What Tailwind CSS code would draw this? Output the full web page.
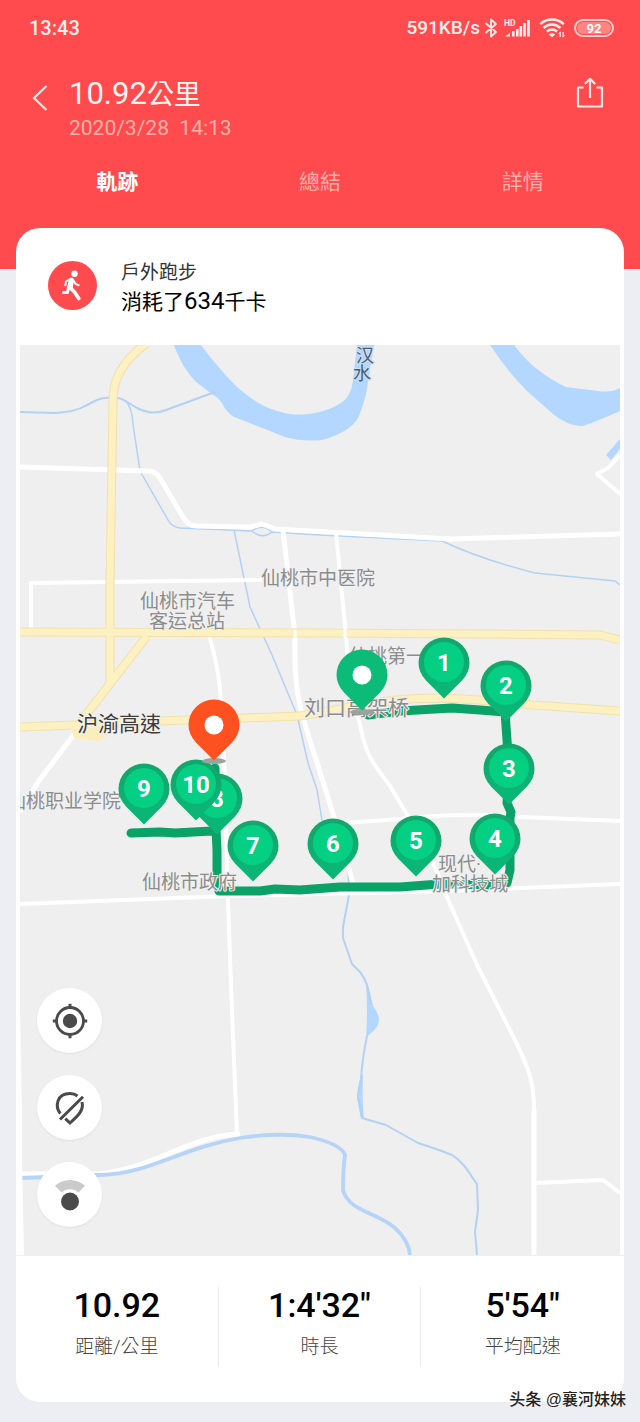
<!DOCTYPE html>
<html lang="zh-Hant">
<head>
<meta charset="utf-8">
<meta name="viewport" content="width=device-width, initial-scale=1">
<title>10.92公里</title>
<script src="https://cdn.jsdelivr.net/npm/@tailwindcss/browser@4"></script>
</head>
<body class="relative min-h-screen bg-[#edeef3] pb-5 font-['Roboto','Noto_Sans_CJK_TC',sans-serif] text-black">

<header class="bg-[#ff4a4e] pb-16 text-white">
  <div class="flex h-14 items-center justify-between pr-[26px] pl-[29px] text-[#ffeeea]">
    <time class="text-[20px] leading-6 font-medium">13:43</time>
    <div class="flex items-center">
      <span class="text-[19px] leading-6 font-medium">591KB/s</span>
      <svg class="ml-1 h-5 w-[14px]" viewBox="0 0 14 20" fill="none" stroke="currentColor" stroke-width="1.8" stroke-linejoin="round" stroke-linecap="round" aria-label="Bluetooth"><path d="M2 5.500 12 14 7 18.500V1.500L12 6 2 14.500"/></svg>
      <svg class="ml-[6px] h-5 w-[27px]" viewBox="0 0 27 20" fill="currentColor" aria-label="HD">
        <text x="0" y="7.500" font-size="8.500" font-weight="700">HD</text>
        <path d="M1 18.500 6 15v3.500zM8 13h2.600v5.500H8zM12 11h2.600v7.500H12zM15.500 8h2.600v10.500h-2.600zM19.200 5h2.600v13.500h-2.600zM23 2h2.800v16.500H23z"/>
      </svg>
      <svg class="ml-2 h-5 w-[27px]" viewBox="0 0 27 20" fill="none" stroke="currentColor" stroke-width="2.500" aria-label="Wi-Fi">
        <path d="M1.200 6.200a17 17 0 0 1 23.600 0M4.600 10a12 12 0 0 1 16.800 0M8 13.500a7.200 7.200 0 0 1 10 0"/>
        <path d="M13 19.200 9.800 16.500a4.600 4.600 0 0 1 6.400 0z" fill="currentColor" stroke="none"/>
        <path d="M21.200 14v5M24.200 14v5" stroke-width="1.300"/>
        <path d="M19.800 16l1.400-2.200M25.600 17l-1.400 2.200" stroke-width="1"/>
      </svg>
      <span class="ml-2 flex h-[18px] w-10 items-center justify-center rounded-full border-2 border-[#ffcfca] p-px">
        <span class="flex h-full w-full items-center justify-center rounded-full bg-[#ff8583] text-[13px] leading-none font-bold text-white">92</span>
      </span>
    </div>
  </div>

  <div class="flex items-start justify-between pt-5 pr-9 pl-8">
    <div class="flex">
      <button type="button" class="mt-2 h-7 w-[37px]" aria-label="返回">
        <svg class="h-7 w-4" viewBox="0 0 16 28" fill="none" stroke="#ffe9e4" stroke-width="2.200"><path d="M14.500 2 2 14l12.500 12"/></svg>
      </button>
      <div>
        <h1 class="text-[27px] leading-9 text-[#fff4ee]"><span class="text-[31px]">10.92</span>公里</h1>
        <p class="text-[21px] leading-[30px] text-[#ffb2ab]">2020/3/28&nbsp; 14:13</p>
      </div>
    </div>
    <button type="button" class="h-9 w-7" aria-label="分享">
      <svg class="h-9 w-7" viewBox="0 0 28 36" fill="none" stroke="#ffe9e4" stroke-width="2.200" stroke-linejoin="round"><path d="M7.500 11.500H2V30.500H26V11.500H20.500M14 22V3M8.800 8 14 2.800 19.200 8"/></svg>
    </button>
  </div>

  <nav class="mt-4 grid grid-cols-3 px-4 text-[21px] leading-[46px]">
    <button type="button" class="font-bold" aria-current="page">軌跡</button>
    <button type="button" class="text-[#ffb0ab]">總結</button>
    <button type="button" class="text-[#ffb0ab]">詳情</button>
  </nav>
</header>

<main class="relative mx-4 -mt-[41px] overflow-hidden rounded-[24px] bg-white">
  <section class="flex h-[117px] items-center gap-6 px-8 pb-[2px]">
    <svg class="size-[49px] shrink-0" viewBox="0 0 49 49" aria-hidden="true">
      <circle cx="24.500" cy="24.500" r="24.500" fill="#ff4a4e"/>
      <circle cx="26.500" cy="12.800" r="3.200" fill="#fff"/>
      <g fill="none" stroke="#fff" stroke-linecap="round" stroke-linejoin="round">
        <path d="M23.300 19.500 22 26.500" stroke-width="5.400"/>
        <path d="M22.500 27 26.500 31 30.800 37.500" stroke-width="3.600"/>
        <path d="M20.500 26 19.500 31.500 15.500 31.500" stroke-width="3"/>
        <path d="M22.500 17.800 18 20.500 17.300 24.300M25.500 19.500 27.500 22.800 30.600 24.200" stroke-width="2"/>
      </g>
    </svg>
    <div class="pt-1">
      <h2 class="text-[19px] leading-7 text-[#333]">戶外跑步</h2>
      <p class="text-[21px] leading-7"><span>消耗了</span><span class="text-[24px]">634</span><span>千卡</span></p>
    </div>
  </section>

  <section class="relative mx-1" aria-label="軌跡地圖">
    <svg class="block h-auto w-full bg-[#efefef]" viewBox="20 345 600 910" fill="none" stroke-linejoin="round">
      <defs>
        <linearGradient id="rim" x1="0" y1="0" x2="0" y2="1"><stop offset="0.300" stop-color="#12a76d"/><stop offset="0.750" stop-color="#0bb576"/></linearGradient>
        <path id="pin" d="M0 35.500-18 17.500C-23 12-25.500 6-25.500 0A25.500 25.500 0 0 1 25.500 0C25.500 6 23 12 18 17.500Z"/>
        <g id="km"><use href="#pin" fill="url(#rim)"/><circle cy="-1" r="20" fill="#05cf82"/></g>
      </defs>

      <!-- water -->
      <g fill="#b3d7ff">
        <path d="M174 345C180 362 190 378 200 385L213 395Q218 397 222 403Q226 412 234 417Q258 426 285 437Q303 442 322 440Q350 432 358 418Q366 400 368 382L374 345H357L353 380Q351 397 341 403C325 413 300 418 281 412C262 408 248 396 237 387Q218 368 201 345Z"/>
        <path d="M490 345Q508 372 527 391L553 414Q569 427 583 426Q600 420 620 411V388Q611 393 598 391L566 387C547 378 530 366 514 345Z"/>
        <path d="M606 455 620 439V449L611 460Z"/>
        <path d="M366 985Q370 992 373 1006Q379 1014 379 1020Q378 1028 371 1033L366 1038Q368 1010 366 985ZM361 1075Q355 1096 358 1103L361 1119 364 1117Q362 1100 363 1075Z"/>
      </g>
      <g stroke="#b3d1f3" stroke-width="2">
        <path d="M20 412 55 413Q75 412 85 406L97 400Q104 397 112 398 120 397 127 402L137 408Q153 416 166 410L215 392"/>
        <path stroke-width="1.500" d="M126 401Q132 408 133 424L140 471 168 520Q172 527 180 528L252 531Q262 523 272 532 262 540 252 531M272 532 320 535 442 541Q480 559 535 573L615 581 620 585"/>
        <path stroke-width="1.500" d="M234 530 250 607 272 655 297 715 308 763 317 790 322 820 348 870 349 897"/>
        <path d="M349 895 343 927V938L352 964 360 972Q369 983 371 1005M367 1036Q362 1060 361 1080L358 1096 362 1118 386 1125 418 1143Q437 1149 452 1155C465 1163 470 1175 477 1184L478 1210 475 1232 477 1255"/>
      </g>
      <path d="M20 1174H95C150 1171 190 1135 240 1134" stroke="#fff" stroke-width="5"/>
      <path d="M20 1178 100 1175C150 1174 180 1148 240 1138Q280 1132 310 1137 341 1144 345 1155 343 1170 343 1190C349 1212 377 1212 395 1228Q409 1241 410 1255" stroke="#b6d4f7" stroke-width="3.800"/>

      <!-- side roads -->
      <g stroke="#fff" stroke-width="5">
        <path d="M20 467 148 471Q156 471 160 478L183 517Q188 526 197 526L250 527 262 524 275 529 450 539 620 534"/>
        <path stroke-width="4" d="M31 630V583L262 580"/>
        <path d="M283 530 295 636C294 675 297 695 303 718L314 753 334 817 355 890"/>
        <path stroke-width="4" d="M336 533 346 635Q349 690 361 728C366 760 380 771 390 786L408 816Q430 851 446 895L478 967 515 1040C531 1073 534 1085 534 1110V1255"/>
        <path d="M534 1110V1255"/>
        <path stroke-width="4" d="M209 635Q219 668 221 700L225 780 228 900 231 985 237 1134"/>
        <path stroke-width="4" d="M20 904 230 896 445 891 620 884"/>
        <path d="M75 733 38 782 20 812"/>
        <path stroke-width="4" d="M620 455 608 468 597 474 620 494M345 823 400 819Q460 812 520 817L620 821M535 1183 603 1180 620 1193"/>
      </g>
      <path d="M20 1010 22 1110V1160L24 1255H20Z" fill="#fff"/>

      <!-- highways: casing, then surface -->
      <g stroke="#f1e2ac" stroke-width="9">
        <path d="M147 343Q113 367 113 400L110 583V683"/>
        <path d="M147 636 109 685 76 728"/>
        <path d="M20 632 320 633 600 635 620 640"/>
        <path d="M20 727 75 725 160 721 300 716 340 709Q390 698 435 698 480 699 533 705L620 711"/>
      </g>
      <path d="M71 728 74 738 98 741Q107 739 112 727Z" fill="#fbeebb"/>
      <g stroke="#fdf0c1" stroke-width="7">
        <path d="M147 343Q113 367 113 400L110 583V683"/>
        <path d="M147 636 109 685 76 728"/>
        <path d="M20 632 320 633 600 635 620 640"/>
        <path d="M20 727 75 725 160 721 300 716 340 709Q390 698 435 698 480 699 533 705L620 711"/>
      </g>
      <path d="M345 628V638M295 630V637" stroke="#fff" stroke-width="3"/>

      <!-- run track -->
      <path stroke="#0aa266" stroke-width="9" stroke-linecap="round" d="M131 833 160 832 175 833 212 831M215 768 216 830 217 850 217 880 219 891 260 891 275 889 300 890 340 887 400 887 440 884 490 885 507 883 510 870 510 818 511 812 507 803 509 770 507 740 505 712 480 710 452 708 400 711 368 715"/>

      <!-- place names -->
      <g font-family="'Noto Sans CJK SC',sans-serif" font-size="19" font-weight="400" fill="#8c8c8c" stroke="#f1f1f1" stroke-width="2" paint-order="stroke">
        <text x="261" y="585">仙桃市中医院</text>
        <text x="140" y="608">仙桃市汽车</text>
        <text x="149" y="628">客运总站</text>
        <text x="349" y="663">仙桃第一</text>
        <text x="304" y="715" font-size="21">刘口高架桥</text>
        <text x="7" y="808">仙桃职业学院</text>
        <text x="142" y="889">仙桃市政府</text>
        <text x="438" y="871">现代<tspan font-family="Roboto">·</tspan></text>
        <text x="432" y="891">加科技城</text>
        <text x="77" y="731" font-size="21" fill="#3c3c3c">沪渝高速</text>
        <g font-size="18" fill="#4c5c6c" stroke="#c9e0fa">
          <text x="356" y="362">汉</text>
          <text x="353" y="380">水</text>
        </g>
      </g>

      <!-- markers -->
      <g fill="#fff" font-family="Roboto,sans-serif" font-size="24" font-weight="700" text-anchor="middle">
        <ellipse cx="362" cy="712" rx="12" ry="3" fill="#9aa39e"/>
        <g transform="translate(362 675)"><use href="#pin" fill="#0bbb77"/><circle r="9.500"/></g>
        <g transform="translate(444 663)"><use href="#km"/><text y="8">1</text></g>
        <g transform="translate(506 686)"><use href="#km"/><text y="8">2</text></g>
        <g transform="translate(509 769)"><use href="#km"/><text y="8">3</text></g>
        <g transform="translate(495 839)"><use href="#km"/><text y="8">4</text></g>
        <g transform="translate(416 841)"><use href="#km"/><text y="8">5</text></g>
        <g transform="translate(333 844)"><use href="#km"/><text y="8">6</text></g>
        <g transform="translate(253 846)"><use href="#km"/><text y="8">7</text></g>
        <g transform="translate(217 799)"><use href="#km"/><text y="8">8</text></g>
        <g transform="translate(144 789)"><use href="#km"/><text y="8">9</text></g>
        <g transform="translate(196 785)"><use href="#km"/><text y="8">10</text></g>
        <ellipse cx="214" cy="761" rx="12" ry="3" fill="#9aa39e"/>
        <g transform="translate(214 725)"><use href="#pin" fill="#ff5120"/><circle r="9.500"/></g>
      </g>
    </svg>

    <div class="absolute bottom-7 left-[17px] flex flex-col gap-[22px]">
      <button type="button" class="flex size-[65px] items-center justify-center rounded-full bg-white shadow-sm shadow-black/5" aria-label="定位">
        <svg class="size-9" viewBox="0 0 36 36" fill="none" stroke="#4a4a4a"><circle cx="18" cy="18" r="13.500" stroke-width="2.800"/><circle cx="18" cy="18" r="7.200" fill="#4a4a4a" stroke="none"/><path d="M18 .8v4.500M18 30.700v4.500M.8 18h4.500M30.700 18h4.500" stroke-width="3"/></svg>
      </button>
      <button type="button" class="flex size-[65px] items-center justify-center rounded-full bg-white shadow-sm shadow-black/5" aria-label="隱藏標記">
        <svg class="size-9" viewBox="0 0 36 36" fill="none" stroke="#4a4a4a" stroke-width="3"><path d="M8.300 23.500C2.500 16 5 3.500 18 3.500Q22.500 3.500 25.500 6M30 12C32 20 26.500 25.500 18 33L13.300 28.700M8 29.500 31 6.800"/></svg>
      </button>
      <button type="button" class="flex size-[65px] items-center justify-center rounded-full bg-white shadow-sm shadow-black/5" aria-label="地圖模式">
        <svg class="size-9" viewBox="0 0 36 36"><path d="M3 8.800A22 22 0 0 1 33 8.800L26.500 15.500A12.500 12.500 0 0 0 9.500 15.500Z" fill="#cbcbcb"/><circle cx="18" cy="24.500" r="9" fill="#4a4a4a"/></svg>
      </button>
    </div>
  </section>

  <dl class="grid h-[147px] grid-cols-3 items-center border-t border-[#f0f0f0] pb-1 text-center">
    <div class="flex h-20 flex-col-reverse justify-end gap-2 border-r border-[#ececec]">
      <dt class="text-[19px] leading-8 font-light text-[#444]">距離/公里</dt>
      <dd class="text-[34px] leading-9 font-medium">10.92</dd>
    </div>
    <div class="flex h-20 flex-col-reverse justify-end gap-2 border-r border-[#ececec]">
      <dt class="text-[19px] leading-8 font-light text-[#444]">時長</dt>
      <dd class="text-[34px] leading-9 font-medium">1:4'32"</dd>
    </div>
    <div class="flex h-20 flex-col-reverse justify-end gap-2">
      <dt class="text-[19px] leading-8 font-light text-[#444]">平均配速</dt>
      <dd class="text-[34px] leading-9 font-medium">5'54"</dd>
    </div>
  </dl>
</main>

<p class="absolute right-[14px] bottom-2 font-['Liberation_Sans','Noto_Sans_CJK_SC',sans-serif] text-[16px] leading-7 font-medium text-[#222] text-shadow-[-1px_-1px_0_#fff]">头条 @襄河妹妹</p>
</body>
</html>
